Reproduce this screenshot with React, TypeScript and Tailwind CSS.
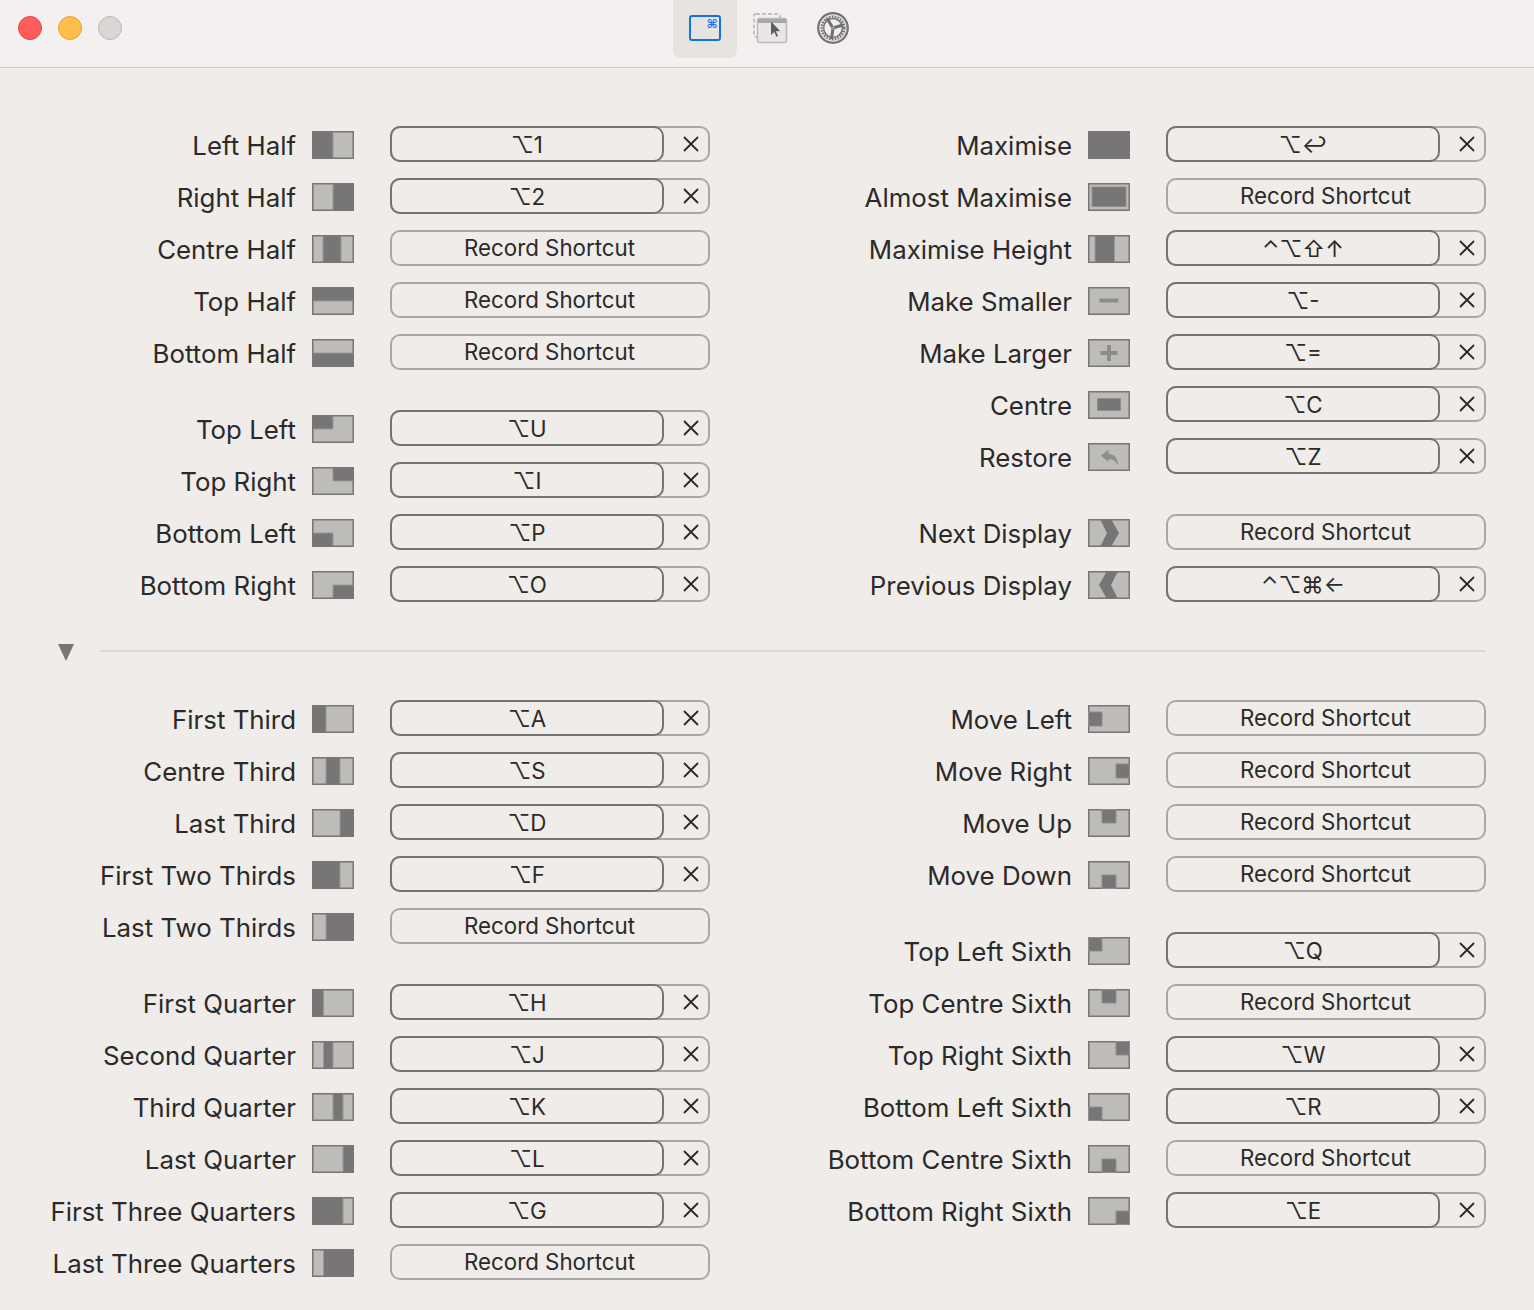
import React from "react";

const r = (a: number, b: number, c: number, d: number) => `${a},${b} ${c},${b} ${c},${d} ${a},${d}`;
const T = 1.5, B = 26.5, L = 1.5, R = 40.5;
const full = r(L, T, R, B);
type Spec = { light?: string[]; dark?: string[]; extra?: React.ReactNode };
const vs = (...xs: [number, number][]): Spec => ({ light: xs.map(([a, b]) => r(a, T, b, B)) });
const box = (a: number, b: number, c: number, d: number): Spec => ({ light: [full], dark: [r(a, b, c, d)] });

const icons: Record<string, Spec> = {
  leftHalf: vs([21, R]),
  rightHalf: vs([L, 21]),
  centreHalf: vs([L, 11], [29, R]),
  topHalf: { light: [r(L, 14, R, B)] },
  bottomHalf: { light: [r(L, T, R, 14)] },
  topLeft: { light: [`21,${T} ${R},${T} ${R},${B} ${L},${B} ${L},14 21,14`] },
  topRight: { light: [`${L},${T} 21,${T} 21,14 ${R},14 ${R},${B} ${L},${B}`] },
  bottomLeft: { light: [`${L},${T} ${R},${T} ${R},${B} 21,${B} 21,14 ${L},14`] },
  bottomRight: { light: [`${L},${T} ${R},${T} ${R},14 21,14 21,${B} ${L},${B}`] },
  maximise: {},
  almost: { light: [full], dark: [r(4, 4, 38, 23.5)] },
  maxHeight: vs([L, 7], [26.5, R]),
  smaller: { light: [full], extra: <rect x="11.5" y="11.5" width="19" height="4" fill="#8d8c8a" /> },
  larger: {
    light: [full],
    extra: <path d="M19 6h4v6h6.5v4H23v6h-4v-6h-6.5v-4H19z" fill="#8d8c8a" />,
  },
  centre: box(9.5, 7.5, 32.5, 19.5),
  restore: {
    light: [full],
    extra: <path d="M13 12.5 20.5 6.5v4.2c5.5.3 9.5 4 9.5 12-2-4.5-5-6.5-9.5-6.7v3z" fill="#8f8e8c" />,
  },
  next: { light: [full], extra: <polygon points="12,0 23,0 31,14 23,28 12,28 19,14" fill="#777575" /> },
  prev: { light: [full], extra: <polygon points="30,0 19,0 11,14 19,28 30,28 23,14" fill="#777575" /> },
  firstThird: vs([14, R]),
  centreThird: vs([L, 14], [28, R]),
  lastThird: vs([L, 28]),
  firstTwo: vs([28, R]),
  lastTwo: vs([L, 14]),
  q1: vs([11.5, R]),
  q2: vs([L, 11.5], [21, R]),
  q3: vs([L, 21], [31, R]),
  q4: vs([L, 31]),
  q13: vs([31, R]),
  q23: vs([L, 11.5]),
  moveLeft: box(0.5, 7, 14, 21),
  moveRight: box(28, 7, 41.5, 21),
  moveUp: box(14, 0.5, 28, 14),
  moveDown: box(14, 14, 28, 27.5),
  s1: box(0.5, 0.5, 14, 14),
  s2: box(14, 0.5, 28, 14),
  s3: box(28, 0.5, 41.5, 14),
  s4: box(0.5, 14, 14, 27.5),
  s5: box(14, 14, 28, 27.5),
  s6: box(28, 14, 41.5, 27.5),
};

function LayoutIcon({ name }: { name: string }) {
  const s = icons[name];
  return (
    <svg width="42" height="28" viewBox="0 0 42 28" className="mt-0.5 ml-4 shrink-0">
      <rect width="42" height="28" fill="#777575" />
      {s.light?.map((p, i) => (
        <polygon key={i} points={p} fill="#bdbcb9" stroke="#999896" strokeWidth="1" />
      ))}
      {s.dark?.map((p, i) => (
        <polygon key={i} points={p} fill="#777575" stroke="#8f8e8c" strokeWidth="1" />
      ))}
      {s.extra}
    </svg>
  );
}

function CloseIcon() {
  return (
    <svg width="16" height="16" viewBox="0 0 16 16" className="shrink-0">
      <path d="M1 1 15 15M15 1 1 15" stroke="#2b2a29" strokeWidth="1.8" fill="none" />
    </svg>
  );
}

function Shortcut({ keys }: { keys?: string }) {
  if (!keys) {
    return (
      <div className="ml-9 flex h-9 w-80 shrink-0 items-center justify-center rounded-[10px] border-2 border-[#aaa8a6] pr-px text-[22.3px] text-[#2b2a29]">
        Record Shortcut
      </div>
    );
  }
  return (
    <div className="ml-9 flex h-9 w-80 shrink-0 items-center rounded-[10px] border-2 border-[#aaa8a6]">
      <div className="-my-0.5 -ml-0.5 flex h-9 w-[274px] items-center justify-center rounded-[10px] border-2 border-[#767472] pt-px text-[22.3px] text-[#2b2a29]">
        {keys}
      </div>
      <div className="flex flex-1 items-center pl-[19px]">
        <CloseIcon />
      </div>
    </div>
  );
}

type Item = [string, string, string?];

function Row({ item }: { item: Item }) {
  const [label, icon, keys] = item;
  return (
    <div className="flex h-9 items-center">
      <div className="mt-1 w-[296px] shrink-0 text-right text-[25.85px] whitespace-nowrap text-[#2b2a29]">{label}</div>
      <LayoutIcon name={icon} />
      <Shortcut keys={keys} />
    </div>
  );
}

function Column({ groups }: { groups: Item[][] }) {
  return (
    <div className="flex w-[710px] flex-col gap-10">
      {groups.map((g, i) => (
        <div key={i} className="flex flex-col gap-4">
          {g.map((item) => (
            <Row key={item[0]} item={item} />
          ))}
        </div>
      ))}
    </div>
  );
}

const s1L: Item[][] = [
  [
    ["Left Half", "leftHalf", "⌥1"],
    ["Right Half", "rightHalf", "⌥2"],
    ["Centre Half", "centreHalf"],
    ["Top Half", "topHalf"],
    ["Bottom Half", "bottomHalf"],
  ],
  [
    ["Top Left", "topLeft", "⌥U"],
    ["Top Right", "topRight", "⌥I"],
    ["Bottom Left", "bottomLeft", "⌥P"],
    ["Bottom Right", "bottomRight", "⌥O"],
  ],
];
const s1R: Item[][] = [
  [
    ["Maximise", "maximise", "⌥↩"],
    ["Almost Maximise", "almost"],
    ["Maximise Height", "maxHeight", "⌃⌥⇧↑"],
    ["Make Smaller", "smaller", "⌥-"],
    ["Make Larger", "larger", "⌥="],
    ["Centre", "centre", "⌥C"],
    ["Restore", "restore", "⌥Z"],
  ],
  [
    ["Next Display", "next"],
    ["Previous Display", "prev", "⌃⌥⌘←"],
  ],
];
const s2L: Item[][] = [
  [
    ["First Third", "firstThird", "⌥A"],
    ["Centre Third", "centreThird", "⌥S"],
    ["Last Third", "lastThird", "⌥D"],
    ["First Two Thirds", "firstTwo", "⌥F"],
    ["Last Two Thirds", "lastTwo"],
  ],
  [
    ["First Quarter", "q1", "⌥H"],
    ["Second Quarter", "q2", "⌥J"],
    ["Third Quarter", "q3", "⌥K"],
    ["Last Quarter", "q4", "⌥L"],
    ["First Three Quarters", "q13", "⌥G"],
    ["Last Three Quarters", "q23"],
  ],
];
const s2R: Item[][] = [
  [
    ["Move Left", "moveLeft"],
    ["Move Right", "moveRight"],
    ["Move Up", "moveUp"],
    ["Move Down", "moveDown"],
  ],
  [
    ["Top Left Sixth", "s1", "⌥Q"],
    ["Top Centre Sixth", "s2"],
    ["Top Right Sixth", "s3", "⌥W"],
    ["Bottom Left Sixth", "s4", "⌥R"],
    ["Bottom Centre Sixth", "s5"],
    ["Bottom Right Sixth", "s6", "⌥E"],
  ],
];

function GearIcon() {
  return (
    <svg width="34" height="34" viewBox="0 0 34 34">
      <circle cx="17" cy="17" r="14.8" fill="#e4e2e0" stroke="#757472" strokeWidth="2.2" />
      <circle cx="17" cy="17" r="11" fill="none" stroke="#777674" strokeWidth="3" strokeDasharray="1.5 1.3" />
      <circle cx="17" cy="17" r="9.3" fill="#f1efed" stroke="#757472" strokeWidth="1.3" />
      <path d="M17 17 11 7.5M17 17 27 14M17 17 15.5 28" stroke="#6f6e6c" strokeWidth="3" fill="none" />
      <circle cx="17" cy="17" r="1.8" fill="#9c9b99" />
    </svg>
  );
}

export default function App() {
  return (
    <div className="flex min-h-[1310px] flex-col bg-[#efecea] font-['Inter','DejaVu_Sans',sans-serif]">
      <header className="flex h-[67.5px] shrink-0 border-b-[1.5px] border-[#cbc8c6] bg-[#f3f0ef]">
        <div className="flex gap-4 pt-4 pl-[18px]">
          <span className="h-6 w-6 rounded-full border border-[#e2474a] bg-[#ff5c5c]" />
          <span className="h-6 w-6 rounded-full border border-[#e5a23d] bg-[#ffbd4a]" />
          <span className="h-6 w-6 rounded-full border border-[#bbb8b5] bg-[#d9d7d5]" />
        </div>
        <div className="ml-[551px] flex h-[58px] w-16 items-start justify-center rounded-b-lg bg-[#e6e3e1] pt-[15px]">
          <svg width="32" height="26" viewBox="0 0 32 26">
            <rect x="1" y="1" width="30" height="24" rx="2" fill="none" stroke="#1273e6" strokeWidth="2" />
            <text x="23" y="13" textAnchor="middle" fontSize="12" fontWeight="700" fontFamily="DejaVu Sans" fill="#1273e6">
              ⌘
            </text>
          </svg>
        </div>
        <svg width="35" height="31" viewBox="0 0 35 31" className="mt-[13px] ml-4">
          <rect x="1" y="1" width="26" height="23" rx="2" fill="none" stroke="#b5b3b1" strokeWidth="1.5" strokeDasharray="4 2" />
          <rect x="4.5" y="5.5" width="29" height="24" rx="2" fill="#e9e7e5" stroke="#bdbbb9" strokeWidth="1.5" />
          <rect x="5" y="6" width="28" height="4" fill="#a9a7a5" />
          <path d="M18 8.5v13.5l3.2-3 2.3 4.8 1.6-.8-2.2-4.7 4.2-.3z" fill="#5f5e5c" />
        </svg>
        <div className="mt-[11px] ml-[28px]">
          <GearIcon />
        </div>
      </header>

      <div className="flex gap-[66px] pt-[58.5px]">
        <Column groups={s1L} />
        <Column groups={s1R} />
      </div>

      <div className="mt-[39px] mb-[39px] flex h-5 items-center pr-12 pl-[58px]">
        <svg width="16" height="18" viewBox="0 0 16 18" className="mt-1 shrink-0">
          <path d="M0 0H16L8 17z" fill="#777575" />
        </svg>
        <div className="ml-[26px] h-0.5 flex-1 bg-[#dbd8d6]" />
      </div>

      <div className="flex gap-[66px]">
        <Column groups={s2L} />
        <Column groups={s2R} />
      </div>
    </div>
  );
}
